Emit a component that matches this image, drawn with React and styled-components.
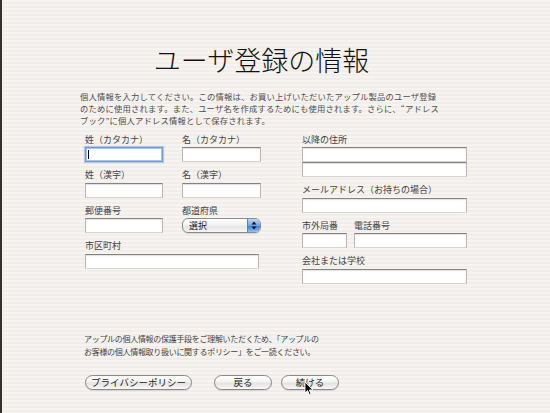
import React from "react";
import styled, { createGlobalStyle } from "styled-components";

const Global = createGlobalStyle`
  html, body { margin: 0; padding: 0; }
  body { font-family: "Noto Sans CJK JP", "Liberation Sans", sans-serif; }
`;

const Screen = styled.div`
  position: relative;
  width: 550px;
  height: 413px;
  box-sizing: border-box;
  border-left: 2px solid #35312c;
  padding-left: 78px;
  display: flex;
  flex-direction: column;
  overflow: hidden;
  background: repeating-linear-gradient(
    to bottom,
    #f6f3f0 0px,
    #f6f3f0 2px,
    #f1edea 2px,
    #f1edea 4px
  );
  color: #333;
`;

const Title = styled.h1`
  margin: 0;
  padding-top: 44px;
  width: 363px;
  text-align: center;
  font-size: 27px;
  line-height: 32px;
  font-weight: 300;
  color: #111;
  white-space: nowrap;
`;

const Intro = styled.div`
  margin: 14px 0 0;
  font-size: 8.3px;
  letter-spacing: 0.2px;
  color: #505050;
  white-space: nowrap;
`;

const Line = styled.div`
  height: ${(p) => p.$h}px;
  line-height: ${(p) => p.$h}px;
`;

const Form = styled.div`
  display: flex;
  margin: 7.5px 0 0 5px;
  gap: 41px;
`;

const LeftGrid = styled.div`
  display: grid;
  grid-template-columns: 78px 79px;
  column-gap: 19px;
  row-gap: 7px;
  align-content: start;
`;

const RightCol = styled.div`
  display: flex;
  flex-direction: column;
  gap: 7px;
  width: 165px;
`;

const Field = styled.div`
  display: flex;
  flex-direction: column;
  grid-column: ${(p) => (p.$span ? "1 / span 2" : "auto")};
  width: ${(p) => (p.$w ? p.$w + "px" : "auto")};
`;

const Label = styled.label`
  font-size: 9px;
  line-height: 12px;
  margin-bottom: 1.5px;
  color: #444;
  white-space: nowrap;
`;

const Input = styled.div`
  position: relative;
  box-sizing: border-box;
  height: 15px;
  width: ${(p) => (p.$w ? p.$w + "px" : "100%")};
  background: #fff;
  border: 1px solid #b9b6b4;
  border-top-color: #85827f;
  border-bottom-color: #d6d3d1;
  box-shadow: inset 0 1px 1px rgba(0, 0, 0, 0.12);
  ${(p) =>
    p.$focus &&
    `
    border: 1px solid #6f9ad0;
    box-shadow: inset 0 0 0 1px #a9c5e8, 0 0 1px 1px rgba(110,155,215,0.45);
  `}
`;

const Caret = styled.span`
  position: absolute;
  left: 2px;
  top: 2px;
  width: 1px;
  height: 9px;
  background: #000;
`;

const Row = styled.div`
  display: flex;
  gap: 7px;
`;

const Popup = styled.div`
  box-sizing: border-box;
  height: 15px;
  width: 79px;
  display: flex;
  border: 1px solid #8d8b89;
  border-radius: 6px;
  overflow: hidden;
  background: linear-gradient(to bottom, #ffffff 0%, #f1f1f1 50%, #e4e4e4 55%, #f7f7f7 100%);
  box-shadow: 0 1px 1px rgba(0, 0, 0, 0.12);
`;

const PopupText = styled.span`
  flex: 1;
  font-size: 9px;
  line-height: 13px;
  padding-left: 6px;
  color: #222;
`;

const PopupArrows = styled.span`
  width: 12px;
  display: flex;
  align-items: center;
  justify-content: center;
  border-left: 1px solid #5c84b8;
  background: linear-gradient(to bottom, #bcd6f6 0%, #6fa3e6 50%, #3f7fd8 55%, #8fc0f6 100%);
`;

const Footer = styled.div`
  margin-top: auto;
  padding: 0 0 23px 4px;
`;

const Notice = styled.div`
  margin: 0 0 16.75px;
  font-size: 8px;
  color: #444;
  white-space: nowrap;
  letter-spacing: -0.3px;
`;

const Buttons = styled.div`
  display: flex;
  padding-left: 1px;
`;

const Button = styled.button`
  box-sizing: border-box;
  height: 15px;
  width: ${(p) => p.$w}px;
  margin-left: ${(p) => p.$ml || 0}px;
  padding: 0;
  border: 1px solid #8a8886;
  border-radius: 8px;
  background: linear-gradient(to bottom, #ffffff 0%, #f3f3f3 45%, #e2e2e2 55%, #f8f8f8 100%);
  box-shadow: 0 1px 1px rgba(0, 0, 0, 0.12);
  font-family: "Noto Sans CJK JP", "Liberation Sans", sans-serif;
  font-size: 9.5px;
  line-height: 13px;
  color: #222;
  white-space: nowrap;
`;

const Pointer = styled.svg`
  position: absolute;
  left: 302px;
  top: 381px;
`;

export default function App() {
  return (
    <>
      <Global />
      <Screen>
        <Title>ユーザ登録の情報</Title>
        <Intro>
          <Line $h={12}>
            個人情報を入力してください。この情報は、お買い上げいただいたアップル製品のユーザ登録
          </Line>
          <Line $h={12}>
            のために使用されます。また、ユーザ名を作成するためにも使用されます。さらに、“アドレス
          </Line>
          <Line $h={12}>ブック”に個人アドレス情報として保存されます。</Line>
        </Intro>
        <Form>
          <LeftGrid>
            <Field>
              <Label>姓（カタカナ）</Label>
              <Input $focus>
                <Caret />
              </Input>
            </Field>
            <Field>
              <Label>名（カタカナ）</Label>
              <Input />
            </Field>
            <Field>
              <Label>姓（漢字）</Label>
              <Input />
            </Field>
            <Field>
              <Label>名（漢字）</Label>
              <Input />
            </Field>
            <Field>
              <Label>郵便番号</Label>
              <Input />
            </Field>
            <Field>
              <Label>都道府県</Label>
              <Popup>
                <PopupText>選択</PopupText>
                <PopupArrows>
                  <svg width="6" height="9" viewBox="0 0 6 9">
                    <path d="M3 0.5 L5.5 3.5 H0.5 Z" fill="#111" />
                    <path d="M3 8.5 L5.5 5.5 H0.5 Z" fill="#111" />
                  </svg>
                </PopupArrows>
              </Popup>
            </Field>
            <Field $span>
              <Label>市区町村</Label>
              <Input $w={174} />
            </Field>
          </LeftGrid>
          <RightCol>
            <Field>
              <Label>以降の住所</Label>
              <Input />
              <Input />
            </Field>
            <Field>
              <Label>メールアドレス（お持ちの場合）</Label>
              <Input />
            </Field>
            <Row>
              <Field $w={45}>
                <Label>市外局番</Label>
                <Input />
              </Field>
              <Field $w={113}>
                <Label>電話番号</Label>
                <Input />
              </Field>
            </Row>
            <Field>
              <Label>会社または学校</Label>
              <Input />
            </Field>
          </RightCol>
        </Form>
        <Footer>
          <Notice>
            <Line $h={12.5}>
              アップルの個人情報の保護手段をご理解いただくため、「アップルの
            </Line>
            <Line $h={12.5}>
              お客様の個人情報取り扱いに関するポリシー」をご一読ください。
            </Line>
          </Notice>
          <Buttons>
            <Button $w={107}>プライバシーポリシー</Button>
            <Button $w={58} $ml={22}>戻る</Button>
            <Button $w={58} $ml={9}>続ける</Button>
          </Buttons>
        </Footer>
        <Pointer width="10" height="15" viewBox="0 0 10 15">
          <path
            d="M1 1 L1 12 L3.6 9.6 L5.4 13.6 L7 12.9 L5.3 9 L8.8 9 Z"
            fill="#000"
            stroke="#fff"
            strokeWidth="0.9"
            strokeLinejoin="round"
          />
        </Pointer>
      </Screen>
    </>
  );
}
